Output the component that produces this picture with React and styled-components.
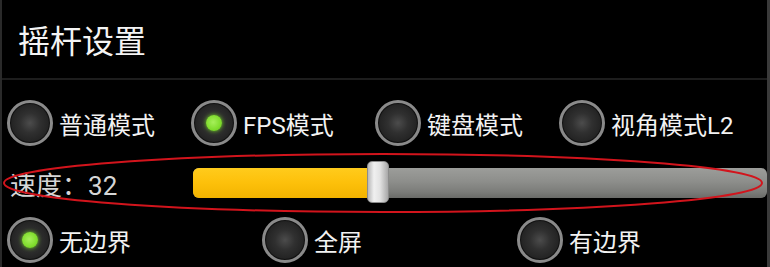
import React from "react";
import styled, { createGlobalStyle } from "styled-components";

const Global = createGlobalStyle`
  html, body {
    margin: 0;
    padding: 0;
    background: #000;
  }
  body {
    font-family: Roboto, "Noto Sans CJK SC", sans-serif;
    color: #f2f2f2;
  }
`;

const modes = [
  { label: "普通模式", on: false },
  { label: "FPS模式", on: true },
  { label: "键盘模式", on: false },
  { label: "视角模式L2", on: false },
];

const borders = [
  { label: "无边界", on: true },
  { label: "全屏", on: false },
  { label: "有边界", on: false },
];

const App = () => {
  const speed = 32;
  const fill = 179;
  return (
    <>
      <Global />
      <Page>
        <Header>摇杆设置</Header>
        <RadioRow $cols={4} $col={184} $top={20}>
          {modes.map((m) => (
            <RadioItem key={m.label}>
              <Radio $on={m.on} />
              <span>{m.label}</span>
            </RadioItem>
          ))}
        </RadioRow>
        <SpeedRow>
          <SpeedLabel>速度：{speed}</SpeedLabel>
          <Track>
            <Fill style={{ width: fill }} />
            <Thumb style={{ left: fill - 5 }} />
          </Track>
        </SpeedRow>
        <RadioRow $cols={3} $col={255} $top={12}>
          {borders.map((b) => (
            <RadioItem key={b.label}>
              <Radio $on={b.on} />
              <span>{b.label}</span>
            </RadioItem>
          ))}
        </RadioRow>
        <Mark width="770" height="267" viewBox="0 0 770 267">
          <ellipse cx="381" cy="183" rx="379" ry="29" fill="none" stroke="#d2141c" strokeWidth="2" />
        </Mark>
      </Page>
    </>
  );
};

export default App;

const Page = styled.div`
  position: relative;
  width: 770px;
  height: 267px;
  overflow: hidden;
  background: #000;
  box-sizing: border-box;
  border-left: 2px solid #2a2a2a;
  border-right: 3px solid #3a3a3a;
`;

const Header = styled.div`
  height: 78px;
  display: flex;
  align-items: center;
  padding-left: 16px;
  font-size: 32px;
  color: #f4f4f4;
  border-bottom: 2px solid #1d1d1d;
`;

const RadioRow = styled.div`
  display: grid;
  grid-template-columns: repeat(${(p) => p.$cols}, ${(p) => p.$col}px);
  padding-left: 5px;
  margin-top: ${(p) => p.$top}px;
  height: 46px;
`;

const RadioItem = styled.div`
  display: flex;
  align-items: center;
  gap: 6px;
  font-size: 24px;
  color: #f2f2f2;
  white-space: nowrap;
`;

const Radio = styled.div`
  position: relative;
  width: 46px;
  height: 46px;
  flex: none;
  box-sizing: border-box;
  border-radius: 50%;
  border: 3px solid #8a8a8a;
  background: radial-gradient(circle, #4c4c4c 0%, #303030 35%, #222 70%, #1c1c1c 100%);
  box-shadow: inset 0 0 0 1px #111;

  &::after {
    content: "";
    position: absolute;
    left: 50%;
    top: 50%;
    width: 16px;
    height: 16px;
    margin: -8px 0 0 -8px;
    border-radius: 50%;
    display: ${(p) => (p.$on ? "block" : "none")};
    background: radial-gradient(circle at 45% 45%, #a6f05a 0%, #7fdc2c 60%, #5fb81c 100%);
    box-shadow: 0 0 4px #6fd020;
  }
`;

const SpeedRow = styled.div`
  display: flex;
  align-items: center;
  margin-top: 15px;
  height: 44px;
`;

const SpeedLabel = styled.div`
  width: 183px;
  padding-left: 8px;
  font-size: 26px;
  color: #d6d6d6;
  white-space: nowrap;
`;

const Track = styled.div`
  position: relative;
  flex: 1;
  height: 30px;
  margin-right: 0;
  border-radius: 6px;
  background: linear-gradient(to bottom, #9c9d9a 0%, #8d8e8b 45%, #7b7c79 80%, #6a6b68 100%);
`;

const Fill = styled.div`
  position: absolute;
  left: 0;
  top: 0;
  bottom: 0;
  border-radius: 6px 0 0 6px;
  background: linear-gradient(to bottom, #ffcb1c 0%, #fdc00a 50%, #f2b300 100%);
`;

const Thumb = styled.div`
  position: absolute;
  top: -7px;
  width: 22px;
  height: 42px;
  border-radius: 5px;
  box-sizing: border-box;
  border: 1px solid #8c8c8c;
  background: linear-gradient(to right, #b8b8b8 0%, #f0f0f0 30%, #e2e2e2 60%, #a8a8a8 100%);
`;

const Mark = styled.svg`
  position: absolute;
  left: 0;
  top: 0;
  pointer-events: none;
`;
